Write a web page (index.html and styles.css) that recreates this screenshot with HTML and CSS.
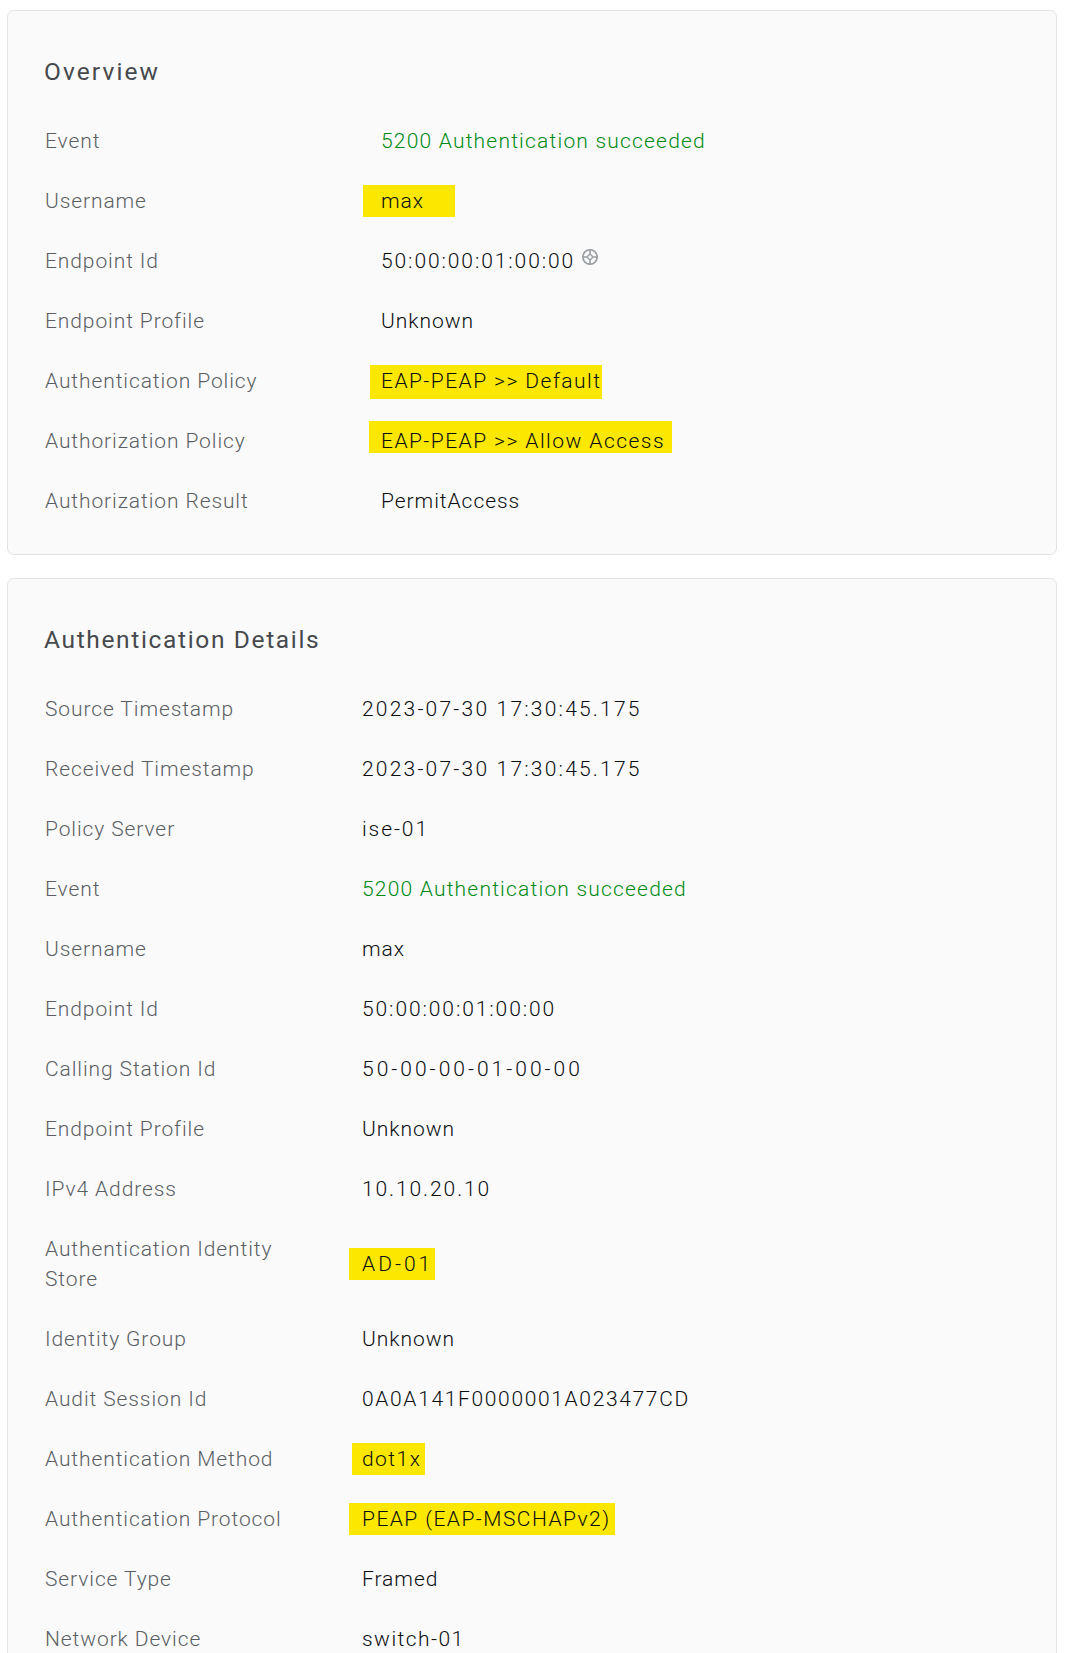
FILE: index.html
```html
<!DOCTYPE html>
<html lang="en">
<head>
<meta charset="utf-8">
<title>Authentication detail</title>
<link rel="stylesheet" href="styles.css">
</head>
<body>
<main class="page">
  <section class="card card-overview">
    <h2 class="card-title">Overview</h2>
    <dl class="details">
      <dt>Event</dt><dd class="ok">5200 Authentication succeeded</dd>
      <dt>Username</dt><dd><span class="mark mark-user">max</span></dd>
      <dt>Endpoint Id</dt><dd class="num">50:00:00:01:00:00<svg class="target" viewBox="0 0 18 18" aria-hidden="true"><circle cx="9" cy="9" r="7.2"/><path d="M9 1.8v14.4M1.8 9h14.4"/><circle class="hub" cx="9" cy="9" r="2.3"/></svg></dd>
      <dt>Endpoint Profile</dt><dd>Unknown</dd>
      <dt>Authentication Policy</dt><dd class="mid"><span class="mark mark-default">EAP-PEAP &gt;&gt; Default</span></dd>
      <dt>Authorization Policy</dt><dd class="mid"><span class="mark mark-allow">EAP-PEAP &gt;&gt; Allow Access</span></dd>
      <dt>Authorization Result</dt><dd>PermitAccess</dd>
    </dl>
  </section>
  <section class="card card-auth">
    <h2 class="card-title">Authentication Details</h2>
    <dl class="details">
      <dt>Source Timestamp</dt><dd class="stamp">2023-07-30 17:30:45.175</dd>
      <dt>Received Timestamp</dt><dd class="stamp">2023-07-30 17:30:45.175</dd>
      <dt>Policy Server</dt><dd class="num">ise-01</dd>
      <dt>Event</dt><dd class="ok">5200 Authentication succeeded</dd>
      <dt>Username</dt><dd>max</dd>
      <dt>Endpoint Id</dt><dd class="num">50:00:00:01:00:00</dd>
      <dt>Calling Station Id</dt><dd class="dash">50-00-00-01-00-00</dd>
      <dt>Endpoint Profile</dt><dd>Unknown</dd>
      <dt>IPv4 Address</dt><dd class="num">10.10.20.10</dd>
      <dt>Authentication Identity<br>Store</dt><dd class="dash"><span class="mark mark-store">AD-01</span></dd>
      <dt>Identity Group</dt><dd>Unknown</dd>
      <dt>Audit Session Id</dt><dd class="serial">0A0A141F0000001A023477CD</dd>
      <dt>Authentication Method</dt><dd class="mid"><span class="mark mark-method">dot1x</span></dd>
      <dt>Authentication Protocol</dt><dd class="mid"><span class="mark mark-protocol">PEAP (EAP-MSCHAPv2)</span></dd>
      <dt>Service Type</dt><dd>Framed</dd>
      <dt>Network Device</dt><dd class="mid">switch-01</dd>
    </dl>
  </section>
</main>
</body>
</html>
```
FILE: styles.css
```css
html, body {
  margin: 0;
  height: 1653px;
  overflow: hidden;
  background: #fff;
}
.page {
  padding: 10px 8px 0 7px;
  display: flex;
  flex-direction: column;
  gap: 23px;
  font-family: Roboto, "Liberation Sans", sans-serif;
  font-weight: 300;
  font-size: 21px;
  line-height: 30px;
  letter-spacing: 0.95px;
  color: #0b0e11;
}
.card {
  background: #fafafa;
  border: 1px solid #e3e3e3;
  border-radius: 7px;
  padding: 46px 36px 23px;
}
.card-title {
  margin: 0 0 24px;
  font-size: 24.5px;
  font-weight: 400;
  line-height: 30px;
  letter-spacing: 1.65px;
  color: #46494d;
}
.card-overview .card-title { letter-spacing: 2.1px; }
.details {
  margin: 0;
  display: grid;
}
.card-overview .details { grid-template-columns: 337px 1fr; }
.card-auth .details { grid-template-columns: 318px 1fr; }
.details dt, .details dd {
  margin: 0;
  padding: 15px 0;
}
.details dt {
  color: #5a5f64;
  padding-left: 1px;
  letter-spacing: 0.9px;
}
.details dd { align-self: center; }
.ok { color: #008a14; letter-spacing: 1.2px; }
.details .num { letter-spacing: 1.9px; }
.details .stamp { letter-spacing: 2.2px; }
.details .serial { letter-spacing: 1.65px; }
.details .mid { letter-spacing: 1.45px; }
.details .dash { letter-spacing: 3px; }
.mark {
  display: inline-block;
  height: 32px;
  margin-top: -1px;
  margin-bottom: -1px;
  line-height: 32px;
  background: #fbe700;
  vertical-align: top;
}
.mark-user { margin-left: -18px; padding: 0 31px 0 18px; }
.mark-default { margin-left: -11px; margin-bottom: -3px; height: 34px; padding: 0 1px 0 11px; }
.mark-allow {
  margin: -5px 0 3px -12px;
  height: 27px;
  line-height: 30px;
  padding: 5px 7px 0 12px;
}
.mark-store { margin-left: -13px; padding: 0 2px 0 13px; }
.mark-method { margin-left: -10px; padding: 0 4px 0 10px; }
.mark-protocol { margin-left: -13px; padding: 0 5px 0 13px; }
.target {
  width: 18px;
  height: 18px;
  margin-left: 6px;
  vertical-align: 2px;
  fill: none;
  stroke: #989da2;
  stroke-width: 1.6;
}
.target .hub { fill: #fafafa; stroke-width: 1.2; }
```
